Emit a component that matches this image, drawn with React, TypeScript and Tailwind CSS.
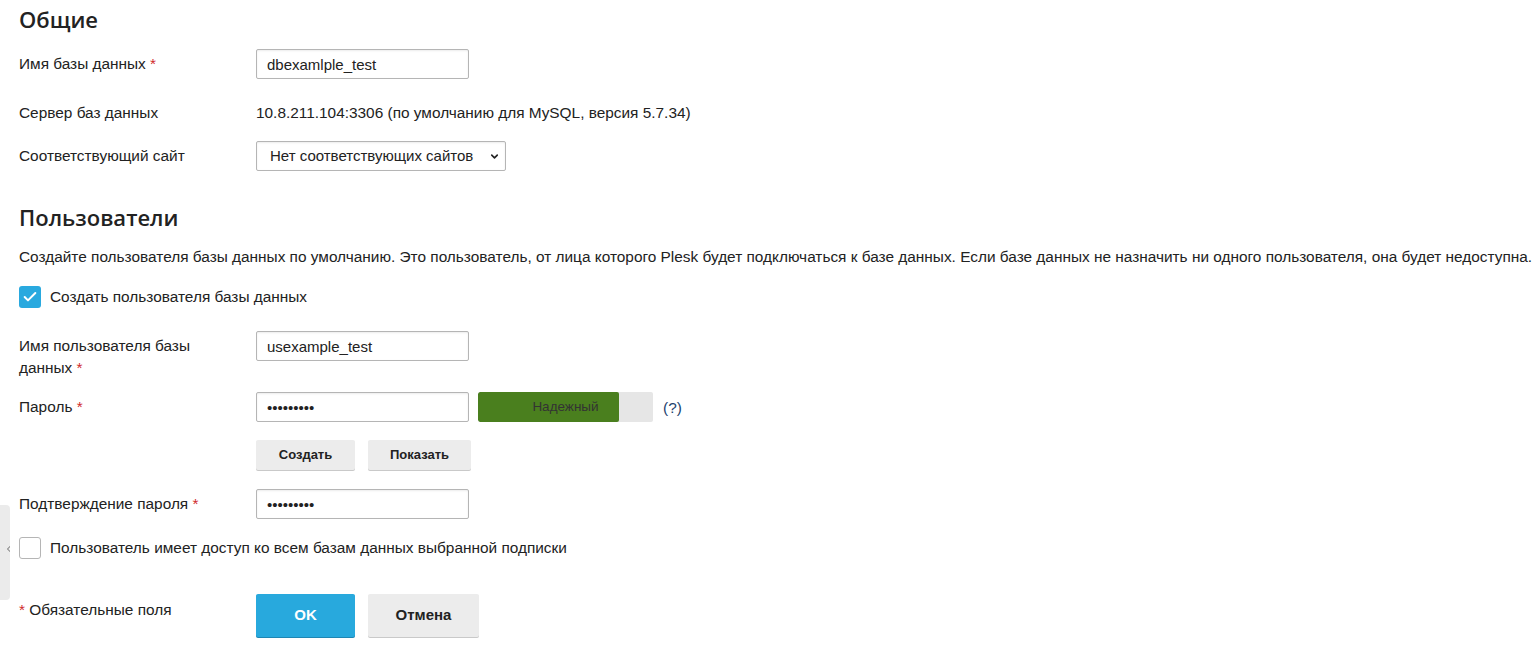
import { Check, ChevronDown, ChevronLeft } from 'lucide-react';

const font = { fontFamily: '"Liberation Sans", Arial, sans-serif' };

function Req() {
  return <span className="text-[#d02b2b]">{'\u00a0*'}</span>;
}

function Label({ children }: { children: React.ReactNode }) {
  return <div className="w-[237px] shrink-0 pt-[4px] pr-4 leading-[22px]">{children}</div>;
}

function TextInput({ value, type = 'text' }: { value: string; type?: string }) {
  return (
    <input
      readOnly
      type={type}
      value={value}
      className="h-[30px] w-[213px] rounded-[2px] border border-[#b5b5b5] bg-white px-[10px] text-[15px] text-[#222] shadow-[inset_0_1px_2px_rgba(0,0,0,0.08)] outline-none"
    />
  );
}

function Heading({ children, className }: { children: React.ReactNode; className: string }) {
  return (
    <h2
      className={`text-[22px] font-semibold leading-[24px] text-[#222] ${className}`}
      style={{ fontFamily: '"Open Sans", sans-serif' }}
    >
      {children}
    </h2>
  );
}

function GrayButton({ children, w, h }: { children: React.ReactNode; w: string; h: string }) {
  return (
    <button
      className={`${w} ${h} rounded-[2px] bg-[#ececec] text-[13px] font-bold text-[#222] shadow-[0_1px_0_#c9c9c9]`}
    >
      {children}
    </button>
  );
}

export default function App() {
  return (
    <div className="relative min-h-screen bg-white pl-[19px] text-[15.4px] text-[#222]" style={font}>
      <div className="absolute left-0 top-[505px] flex h-[95px] w-[10px] items-center justify-end overflow-hidden rounded-r-[4px] bg-[#ebebeb]">
        <ChevronLeft className="-mr-[5px] -mt-[8px] h-3 w-3 shrink-0 text-[#666]" strokeWidth={2} />
      </div>

      <div className="pt-[7px]">
        <Heading className="">Общие</Heading>

        <div className="mt-[18px] flex">
          <Label>
            Имя базы данных<Req />
          </Label>
          <TextInput value="dbexamlple_test" />
        </div>

        <div className="mt-[19px] flex h-[30px]">
          <Label>Сервер баз данных</Label>
          <div className="pt-[4px] leading-[22px]">
            10.8.211.104:3306 (по умолчанию для MySQL, версия 5.7.34)
          </div>
        </div>

        <div className="mt-[13px] flex">
          <Label>Соответствующий сайт</Label>
          <div className="relative flex h-[30px] w-[250px] items-center rounded-[2px] border border-[#b5b5b5] bg-white pl-[13px] text-[15px] shadow-[inset_0_1px_2px_rgba(0,0,0,0.08)]">
            Нет соответствующих сайтов
            <ChevronDown className="absolute right-[5px] top-[9px] h-[11px] w-[11px] text-[#222]" strokeWidth={3.5} />
          </div>
        </div>

        <Heading className="mt-[34px]">Пользователи</Heading>

        <p className="mt-[18px] whitespace-nowrap leading-[20px]">
          Создайте пользователя базы данных по умолчанию. Это пользователь, от лица которого Plesk будет подключаться к базе данных. Если базе данных не назначить ни одного пользователя, она будет недоступна.
        </p>

        <div className="mt-[19px] flex h-[22px] items-center">
          <span className="flex h-[22px] w-[22px] items-center justify-center rounded-[3px] bg-[#29a9df]">
            <Check className="h-[16px] w-[16px] text-white" strokeWidth={3} />
          </span>
          <span className="ml-[9px]">Создать пользователя базы данных</span>
        </div>

        <div className="mt-[23px] flex">
          <Label>
            Имя пользователя базы данных<Req />
          </Label>
          <TextInput value="usexample_test" />
        </div>

        <div className="mt-[13px] flex">
          <Label>
            Пароль<Req />
          </Label>
          <TextInput type="password" value="123456789" />
          <div className="relative ml-[9px] h-[30px] w-[175px] overflow-hidden rounded-[2px] bg-[#e6e6e6]">
            <div className="h-full w-[141px] rounded-[2px] bg-[#4a7f1e]" />
            <div className="absolute inset-0 flex items-center justify-center text-[13.5px] text-[#333]">
              Надежный
            </div>
          </div>
          <span className="ml-[10px] pt-[5px] leading-[22px] text-[#1d3f6e]">(?)</span>
        </div>

        <div className="mt-[18px] flex gap-[13px] pl-[237px]">
          <GrayButton w="w-[99px]" h="h-[30px]">Создать</GrayButton>
          <GrayButton w="w-[103px]" h="h-[30px]">Показать</GrayButton>
        </div>

        <div className="mt-[19px] flex">
          <Label>
            Подтверждение пароля<Req />
          </Label>
          <TextInput type="password" value="123456789" />
        </div>

        <div className="mt-[18px] flex h-[22px] items-center">
          <span className="h-[22px] w-[22px] rounded-[3px] border border-[#b5b5b5] bg-white" />
          <span className="ml-[9px]">Пользователь имеет доступ ко всем базам данных выбранной подписки</span>
        </div>

        <div className="mt-[35px] flex">
          <div className="w-[237px] shrink-0 pt-[5px] leading-[22px]">
            <span className="text-[#d02b2b]">*</span> Обязательные поля
          </div>
          <button className="h-[43px] w-[99px] rounded-[2px] bg-[#28a9dd] text-[15px] font-bold text-white shadow-[0_1px_0_#1e86b3]">
            OK
          </button>
          <button className="ml-[13px] h-[43px] w-[111px] rounded-[2px] bg-[#ececec] text-[15px] font-bold text-[#222] shadow-[0_1px_0_#c9c9c9]">
            Отмена
          </button>
        </div>
      </div>
    </div>
  );
}
